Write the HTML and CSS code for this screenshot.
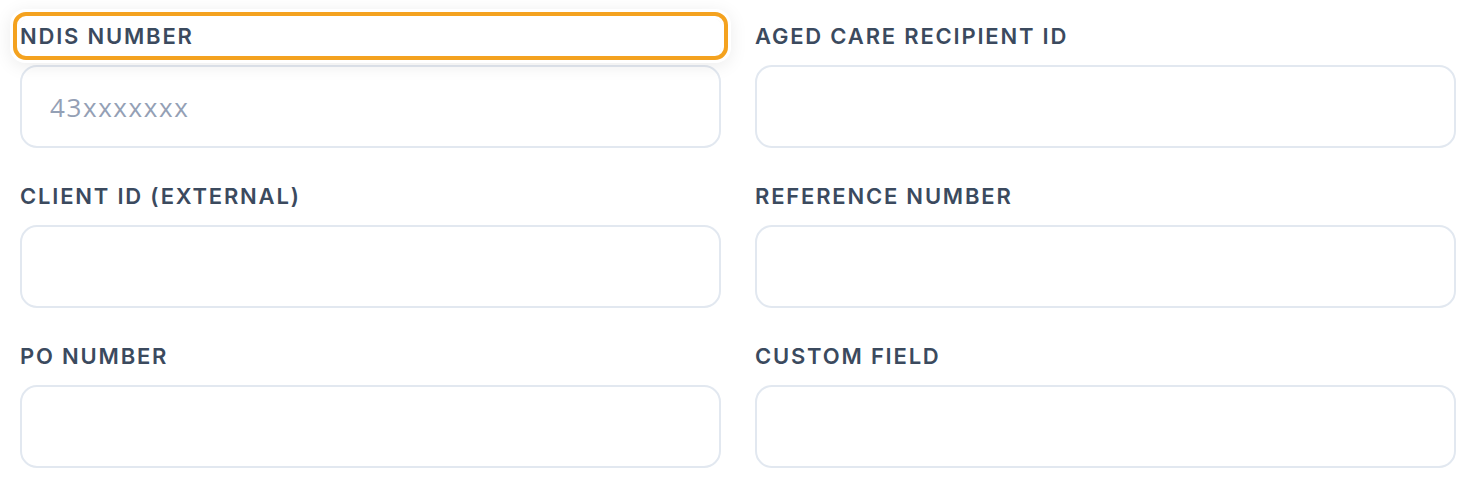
FILE: index.html
```html
<!DOCTYPE html>
<html lang="en">
<head>
<meta charset="utf-8">
<title>Identifiers</title>
<link rel="stylesheet" href="styles.css">
</head>
<body>
<form class="grid">
  <div class="field">
    <label class="label focused" for="ndis">NDIS NUMBER</label>
    <input class="input" id="ndis" type="text" placeholder="43xxxxxxx">
  </div>
  <div class="field">
    <label class="label" for="aged">AGED CARE RECIPIENT ID</label>
    <input class="input" id="aged" type="text">
  </div>
  <div class="field">
    <label class="label" for="client">CLIENT ID (EXTERNAL)</label>
    <input class="input" id="client" type="text">
  </div>
  <div class="field">
    <label class="label" for="ref">REFERENCE NUMBER</label>
    <input class="input" id="ref" type="text">
  </div>
  <div class="field">
    <label class="label" for="po">PO NUMBER</label>
    <input class="input" id="po" type="text">
  </div>
  <div class="field">
    <label class="label" for="custom">CUSTOM FIELD</label>
    <input class="input" id="custom" type="text">
  </div>
</form>
</body>
</html>
```

FILE: styles.css
```css
html, body {
  margin: 0;
  padding: 0;
  background: #ffffff;
}
body {
  font-family: Inter, "Noto Sans", sans-serif;
}
.grid {
  display: grid;
  grid-template-columns: 701px 701px;
  column-gap: 34px;
  row-gap: 31px;
  padding: 19px 0 0 20px;
}
.field {
  display: flex;
  flex-direction: column;
  gap: 12px;
}
.label {
  display: block;
  height: 34px;
  line-height: 34px;
  font-size: 22px;
  font-weight: 600;
  color: #3b4a5e;
  letter-spacing: 1.8px;
  border-radius: 6px;
}
.label.focused {
  outline: 4px solid #f4a21f;
  outline-offset: 3px;
  box-shadow: 0 0 0 10px #ffffff, 0 3px 18px 10px rgba(0, 0, 0, 0.08);
  position: relative;
  z-index: 1;
}
.input {
  box-sizing: border-box;
  width: 100%;
  height: 83px;
  border: 2px solid #e2e8f0;
  border-radius: 17px;
  padding: 0 28px;
  font-family: "Open Sans", "Noto Sans", sans-serif;
  font-size: 26px;
  color: #334155;
  background: #ffffff;
  outline: none;
}
.input::placeholder {
  color: #94a0b5;
  letter-spacing: 1.6px;
}
```
